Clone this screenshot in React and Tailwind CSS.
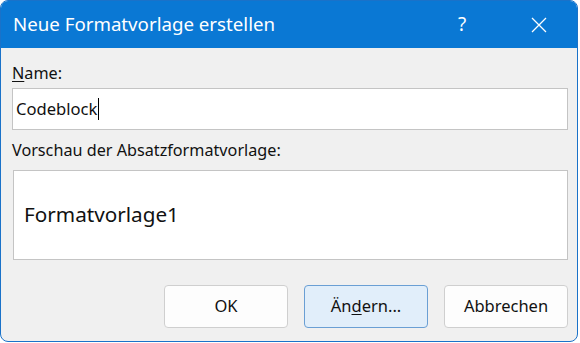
export default function App() {
  return (
    <div
      className="w-[580px] h-[343px] bg-white"
      style={{ fontFamily: '"Noto Sans", "Open Sans", sans-serif' }}
    >
      <div className="w-[578px] h-[342px] rounded-[8px] border border-[#1a72c9] bg-[#f0f0f0] overflow-hidden flex flex-col">
        {/* title bar */}
        <div className="h-[47px] shrink-0 bg-[#0a78d4] flex items-center text-white">
          <span className="pl-[12px] text-[18.7px] leading-none flex-1">
            Neue Formatvorlage erstellen
          </span>
          <span className="w-[40px] text-center text-[19px] leading-none mr-[48px]">?</span>
          <svg width="18" height="18" viewBox="0 0 18 18" className="mr-[29px]">
            <path d="M2 2 L16 16 M16 2 L2 16" stroke="white" strokeWidth="1.3" fill="none" />
          </svg>
        </div>

        {/* content */}
        <div className="flex flex-col pl-[11px] pr-[9px] text-[#111]">
          <div className="mt-[15px] h-[20px] text-[16.2px] leading-[20px]">
            <span className="underline underline-offset-2">N</span>ame:
          </div>
          <div className="mt-[5px] h-[42px] bg-white border border-[#c4c4c4] flex items-center pl-[3px] text-[16.6px]">
            <span>Codeblock</span>
            <span className="w-px h-[22px] bg-black ml-px" />
          </div>
          <div className="mt-[10px] h-[20px] text-[16.2px] leading-[20px]">
            Vorschau der Absatzformatvorlage:
          </div>
          <div className="mt-[10px] ml-px h-[90px] bg-white border border-[#c4c4c4] flex items-center pl-[10px] text-[20.7px]">
            Formatvorlage1
          </div>
          <div className="mt-[25px] flex justify-end gap-[16px] text-[16.5px]">
            <button className="w-[124px] h-[43px] rounded-[4px] border border-[#cfcfcf] bg-[#fdfdfd]">
              OK
            </button>
            <button className="w-[124px] h-[43px] rounded-[4px] border border-[#6a9fd4] bg-[#e1eefa]">
              Än<span className="underline underline-offset-2">d</span>ern...
            </button>
            <button className="w-[124px] h-[43px] rounded-[4px] border border-[#cfcfcf] bg-[#fdfdfd]">
              Abbrechen
            </button>
          </div>
        </div>
      </div>
    </div>
  );
}
